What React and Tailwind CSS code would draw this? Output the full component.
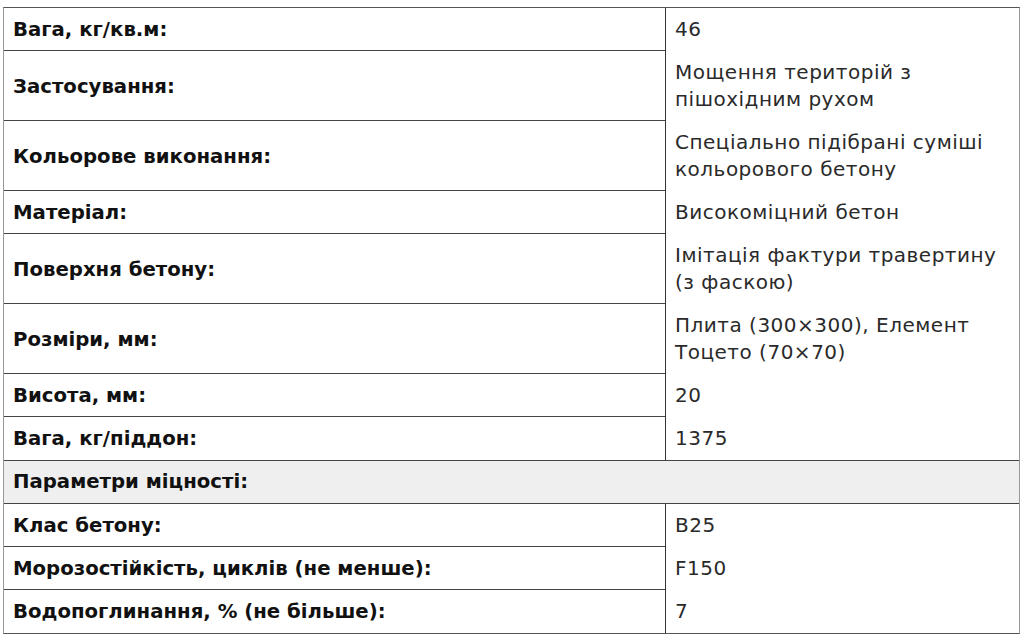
import React from "react";

const rows = [
  { label: "Вага, кг/кв.м:", value: ["46"] },
  { label: "Застосування:", value: ["Мощення територій з", "пішохідним рухом"] },
  { label: "Кольорове виконання:", value: ["Спеціально підібрані суміші", "кольорового бетону"] },
  { label: "Матеріал:", value: ["Високоміцний бетон"] },
  { label: "Поверхня бетону:", value: ["Імітація фактури травертину", "(з фаскою)"] },
  { label: "Розміри, мм:", value: ["Плита (300×300), Елемент", "Тоцето (70×70)"] },
  { label: "Висота, мм:", value: ["20"] },
  { label: "Вага, кг/піддон:", value: ["1375"] },
];

const strength = [
  { label: "Клас бетону:", value: ["B25"] },
  { label: "Морозостійкість, циклів (не менше):", value: ["F150"] },
  { label: "Водопоглинання, % (не більше):", value: ["7"] },
];

const Row = ({ label, value, last }) => (
  <div className="flex">
    <div
      className={
        "w-[661px] flex items-center px-[9px] pt-2 font-bold text-[19.7px] text-[#111] " +
        (last ? "pb-2" : "pb-[7px] border-b border-[#444]")
      }
    >
      {label}
    </div>
    <div className="flex-1 border-l border-[#333] pl-[9px] pr-2 py-2 tracking-[0.5px] text-[#2a2a2a]">
      {value.map((line, i) => (
        <div key={i} className="whitespace-nowrap">{line}</div>
      ))}
    </div>
  </div>
);

const App = () => {
  return (
    <div className="w-[1024px] h-[642px] bg-white pt-[7px] pl-[3px]">
      <div
        className="w-[1017px] border border-[#555] border-l-[#999] border-r-[#999] text-[20px] leading-[27px]"
        style={{ fontFamily: "'DejaVu Sans', sans-serif" }}
      >
        {rows.map((r, i) => (
          <Row key={i} label={r.label} value={r.value} last={i === rows.length - 1} />
        ))}
        <div className="border-y border-[#444] bg-[#efefef] px-[9px] pt-[7px] pb-2 font-bold text-[19.7px] text-[#111]">
          Параметри міцності:
        </div>
        {strength.map((r, i) => (
          <Row key={i} label={r.label} value={r.value} last={i === strength.length - 1} />
        ))}
      </div>
    </div>
  );
};

export default App;
